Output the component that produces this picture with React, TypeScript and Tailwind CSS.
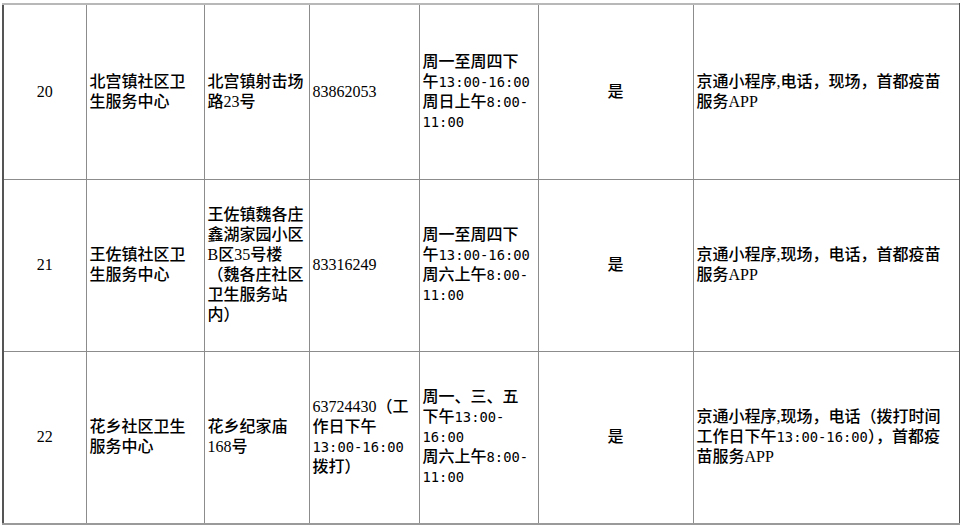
import React from "react";

const T = ({ children }: { children: React.ReactNode }) => (
  <span className="font-['DejaVu_Sans_Mono'] text-[13.8px]">{children}</span>
);

type Cell = { lines: React.ReactNode[]; center?: boolean };

const rows: { h: string; cells: Cell[] }[] = [
  {
    h: "h-[175px]",
    cells: [
      { lines: ["20"], center: true },
      { lines: ["北宫镇社区卫", "生服务中心"] },
      { lines: ["北宫镇射击场", "路23号"] },
      { lines: ["83862053"] },
      {
        lines: [
          "周一至周四下",
          <>午<T>13:00-16:00</T></>,
          <>周日上午<T>8:00-</T></>,
          <T>11:00</T>,
        ],
      },
      { lines: ["是"], center: true },
      { lines: ["京通小程序,电话，现场，首都疫苗", "服务APP"] },
    ],
  },
  {
    h: "h-[172px]",
    cells: [
      { lines: ["21"], center: true },
      { lines: ["王佐镇社区卫", "生服务中心"] },
      {
        lines: ["王佐镇魏各庄", "鑫湖家园小区", "B区35号楼", "（魏各庄社区", "卫生服务站", "内）"],
      },
      { lines: ["83316249"] },
      {
        lines: [
          "周一至周四下",
          <>午<T>13:00-16:00</T></>,
          <>周六上午<T>8:00-</T></>,
          <T>11:00</T>,
        ],
      },
      { lines: ["是"], center: true },
      { lines: ["京通小程序,现场，电话，首都疫苗", "服务APP"] },
    ],
  },
  {
    h: "h-[173px]",
    cells: [
      { lines: ["22"], center: true },
      { lines: ["花乡社区卫生", "服务中心"] },
      { lines: ["花乡纪家庙", "168号"] },
      {
        lines: ["63724430（工", "作日下午", <T>13:00-16:00</T>, "拨打）"],
      },
      {
        lines: [
          "周一、三、五",
          <>下午<T>13:00-</T></>,
          <T>16:00</T>,
          <>周六上午<T>8:00-</T></>,
          <T>11:00</T>,
        ],
      },
      { lines: ["是"], center: true },
      {
        lines: [
          "京通小程序,现场，电话（拨打时间",
          <>工作日下午<T>13:00-16:00</T>），首都疫</>,
          "苗服务APP",
        ],
      },
    ],
  },
];

const widths = ["w-[83px]", "w-[118px]", "w-[105px]", "w-[110px]", "w-[119px]", "w-[155px]", "w-[267px]"];

export default function App() {
  return (
    <div className="w-[960px] h-[525px] bg-white overflow-hidden pt-[3px] pl-[2px]">
      <table className="table-fixed border-collapse w-[957px] font-['Liberation_Serif','Noto_Sans_CJK_SC',serif] font-medium text-[16px] leading-[20px] text-black">
        <colgroup>
          {widths.map((w, i) => (
            <col key={i} className={w} />
          ))}
        </colgroup>
        <tbody>
          {rows.map((r, ri) => (
            <tr key={ri} className={r.h}>
              {r.cells.map((c, ci) => (
                <td
                  key={ci}
                  className={
                    "align-middle border-[1.5px] border-[#8c8c8c] p-0 " +
                    (c.center ? "text-center " : "text-left pl-[3px] ") +
                    (ci === 0 ? "border-l-2 border-l-[#555] " : "") +
                    (ci === 6 ? "border-r-2 border-r-[#555] " : "") +
                    (ri === 0 ? "border-t-2 border-t-[#b8b8b8] " : "") +
                    (ri === 2 ? "border-b-2 border-b-[#9a9a9a] " : "")
                  }
                >
                  {c.lines.map((l, li) => (
                    <div key={li} className="whitespace-nowrap">
                      {l}
                    </div>
                  ))}
                </td>
              ))}
            </tr>
          ))}
        </tbody>
      </table>
    </div>
  );
}
